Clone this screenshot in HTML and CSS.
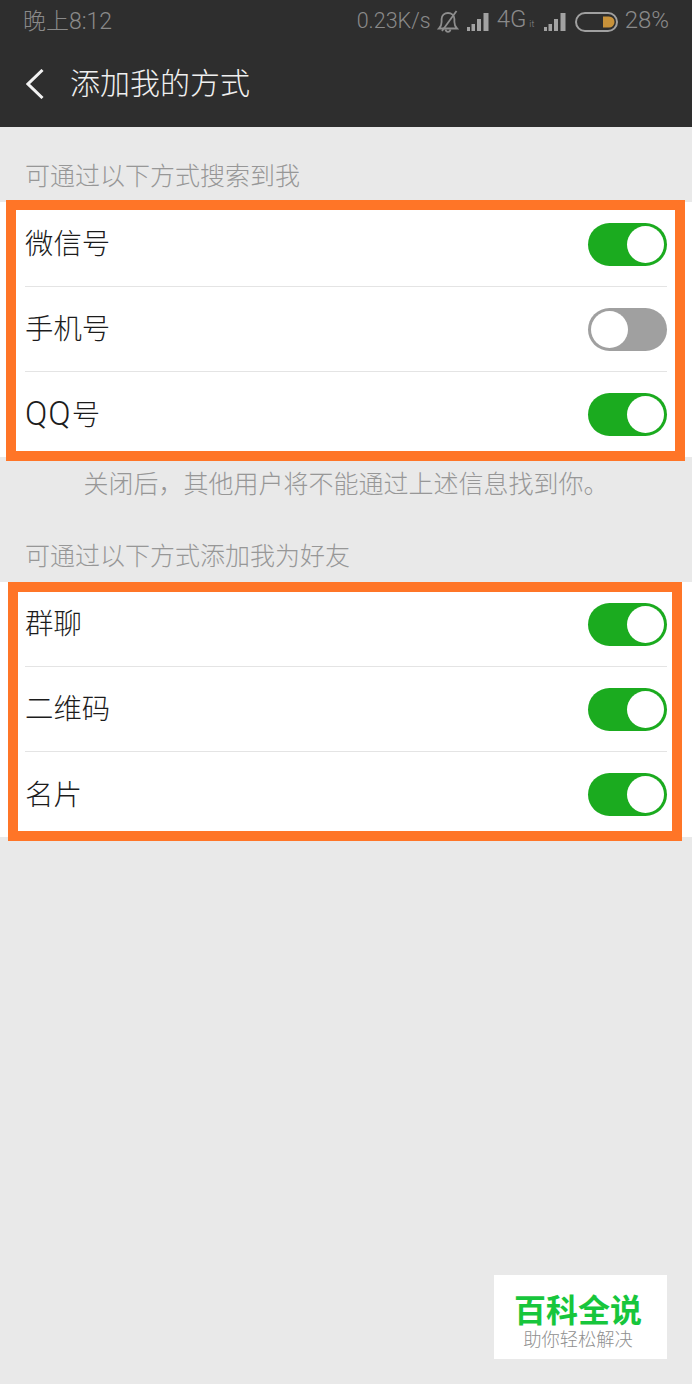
FILE: index.html
```html
<!DOCTYPE html>
<html lang="zh-CN">
<head>
<meta charset="utf-8">
<title>添加我的方式</title>
<link rel="stylesheet" href="styles.css">
</head>
<body>
<header class="top">
  <div class="status">
    <span class="time">晚上8:12</span>
    <div class="status-right">
      <span class="speed">0.23K/s</span>
      <svg class="bell" width="22" height="23" viewBox="0 0 22 23" fill="none" stroke="#8e8e8e" stroke-width="1.8"><path d="M2 18.5h18c-2-2-2.6-3.6-2.6-6.5V9c0-3.500-2.800-6-6.400-6S4.600 5.500 4.600 9v3c0 2.900-.6 4.500-2.600 6.500z"/><path d="M8.500 19.500c.4 1.600 1.300 2.300 2.500 2.300s2.100-.7 2.500-2.300"/><path d="M19.500 1L5 21"/></svg>
      <svg class="signal" width="22" height="18" viewBox="0 0 22 18" fill="#a2a2a2"><rect x="0" y="14" width="3" height="4"/><rect x="4.500" y="11" width="3.500" height="7"/><rect x="10" y="6" width="4" height="12"/><rect x="16.500" y="0" width="5" height="18"/></svg>
      <span class="net">4G<small class="net-sub">it</small></span>
      <svg class="signal" width="22" height="18" viewBox="0 0 22 18" fill="#a2a2a2"><rect x="0" y="14" width="3" height="4"/><rect x="4.500" y="11" width="3.500" height="7"/><rect x="10" y="6" width="4" height="12"/><rect x="16.500" y="0" width="5" height="18"/></svg>
      <svg class="battery" width="44" height="20" viewBox="0 0 44 20"><rect x="1" y="1" width="41" height="18" rx="9" fill="none" stroke="#a0a0a0" stroke-width="2"/><path d="M28 4.500h6a5.500 5.500 0 0 1 0 11h-6z" fill="#c8923a"/></svg>
      <span class="pct">28%</span>
    </div>
  </div>
  <nav class="nav">
    <svg class="back" width="18" height="30" viewBox="0 0 18 30" fill="none" stroke="#f2f2f2" stroke-width="3"><path d="M16.500 1L2 15l14.500 14"/></svg>
    <h1 class="title">添加我的方式</h1>
  </nav>
</header>

<main>
  <p class="caption">可通过以下方式搜索到我</p>
  <section class="group">
    <div class="row"><span class="label">微信号</span><span class="toggle on"><i class="knob"></i></span></div>
    <div class="row"><span class="label">手机号</span><span class="toggle off"><i class="knob"></i></span></div>
    <div class="row"><span class="label"><span class="latin">QQ</span>号</span><span class="toggle on"><i class="knob"></i></span></div>
    <div class="frame frame-a"></div>
  </section>
  <p class="note">关闭后，其他用户将不能通过上述信息找到你。</p>
  <p class="caption">可通过以下方式添加我为好友</p>
  <section class="group">
    <div class="row"><span class="label">群聊</span><span class="toggle on"><i class="knob"></i></span></div>
    <div class="row"><span class="label">二维码</span><span class="toggle on"><i class="knob"></i></span></div>
    <div class="row"><span class="label">名片</span><span class="toggle on"><i class="knob"></i></span></div>
    <div class="frame frame-b"></div>
  </section>
</main>

<aside class="mark">
  <strong class="mark-name">百科全说</strong>
  <span class="mark-sub">助你轻松解决</span>
</aside>
</body>
</html>
```
FILE: styles.css
```css
* { box-sizing: border-box; }
html, body { margin: 0; padding: 0; }
body {
  position: relative;
  width: 692px;
  height: 1384px;
  overflow: hidden;
  background: #e9e9e9;
  font-family: "Noto Sans CJK SC", "Noto Sans", sans-serif;
  font-weight: 300;
}
.top { height: 127px; background: #2e2e2e; }
.status {
  height: 40px;
  padding: 0 23px;
  display: flex;
  align-items: center;
  justify-content: space-between;
  color: #8a8a8a;
  font-size: 23px;
}
.time { font-family: "Roboto", "Noto Sans CJK SC", sans-serif; font-weight: 300; margin-top: -2px; }
.status-right { display: flex; align-items: center; }
.speed, .net, .pct { font-family: "Roboto", sans-serif; font-weight: 300; line-height: 40px; }
.speed { font-size: 21.500px; margin-top: 1px; }
.net, .pct { font-size: 24px; }
.bell { margin-left: 6px; margin-top: 2px; }
.signal { margin-left: 8px; margin-top: 3px; }
.net { margin-left: 8px; display: flex; align-items: baseline; width: 40px; margin-top: 2px; }
.net-sub { font-size: 9px; margin-left: 3px; }
.net + .signal { margin-left: 7px; }
.battery { margin-left: 9px; margin-top: 3px; }
.pct { margin-left: 6px; margin-top: -1px; }
.nav { height: 87px; padding-left: 26px; display: flex; align-items: center; padding-bottom: 1px; }
.back { flex: none; margin-top: 2px; }
.title {
  margin: -4px 0 0 26px;
  color: #f0f0f0;
  font-size: 30px;
  font-weight: 300;
  line-height: 40px;
}
.caption {
  margin: 0;
  padding: 29px 25px 10px;
  color: #979797;
  font-size: 25px;
  line-height: 36px;
}
.note {
  margin: 0;
  padding: 7px 0;
  color: #979797;
  font-size: 25px;
  line-height: 36px;
  text-align: center;
}
.group { position: relative; background: #fff; }
.row {
  height: 85px;
  margin: 0 25px;
  display: flex;
  align-items: center;
  justify-content: space-between;
  border-bottom: 1px solid #e4e4e4;
  color: #1c1c1c;
  font-size: 28.400px;
}
.row:nth-child(3) { border-bottom: 0; }
.label { margin-top: -4px; line-height: 40px; }
.latin { font-family: "Roboto", sans-serif; font-weight: 300; font-size: 33px; letter-spacing: 1px; line-height: 1; }
.toggle {
  width: 79.500px;
  height: 43px;
  padding: 3px;
  border-radius: 22px;
  display: flex;
}
.toggle.on { background: #1bab1f; justify-content: flex-end; }
.toggle.off { background: #a0a0a0; justify-content: flex-start; }
.knob { width: 37px; height: 37px; border-radius: 50%; background: #fff; }
.frame { position: absolute; border: 10.500px solid #ff7527; pointer-events: none; }
.frame-a { left: 6px; right: 7px; top: -2px; bottom: -4px; }
.frame-b { left: 8px; right: 10px; top: 0; bottom: -4px; }
.mark {
  position: absolute;
  left: 494px;
  top: 1275px;
  width: 173px;
  height: 84px;
  padding-right: 5px;
  background: #fff;
  display: flex;
  flex-direction: column;
  align-items: center;
}
.mark-name { margin-top: 15px; color: #17c63c; font-size: 32px; line-height: 37px; font-weight: 700; }
.mark-sub { color: #8f8f8f; font-size: 18.300px; line-height: 22px; }
```
